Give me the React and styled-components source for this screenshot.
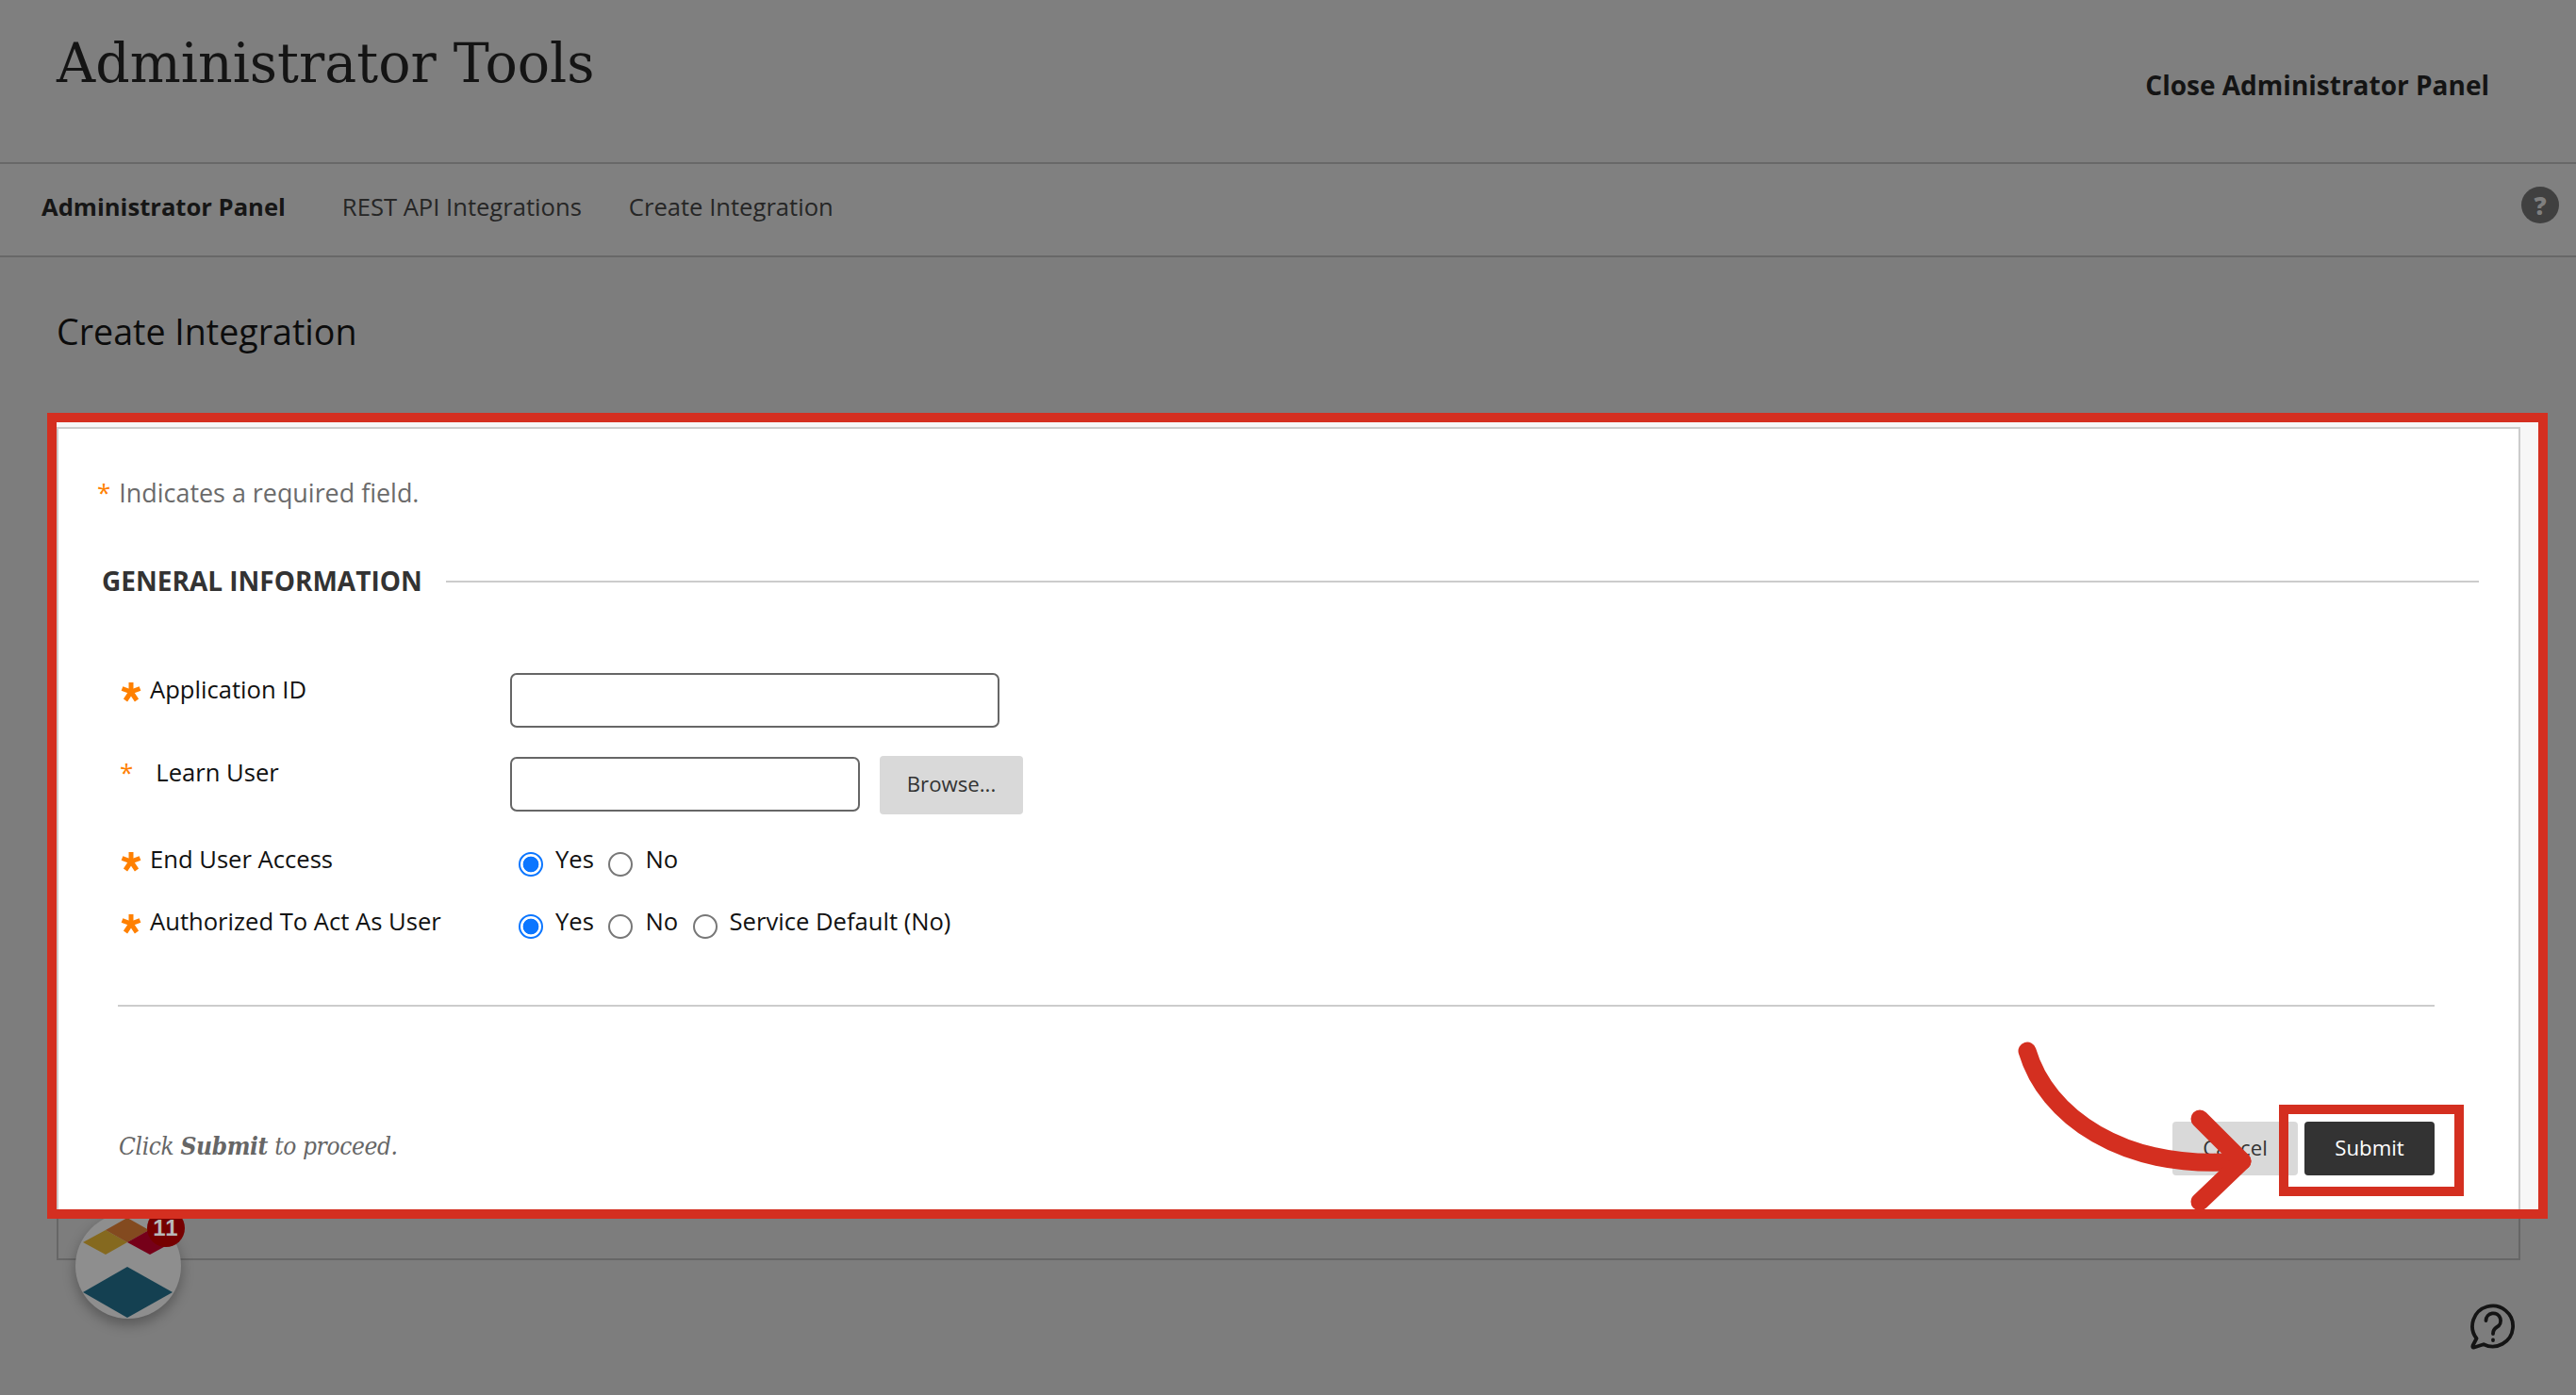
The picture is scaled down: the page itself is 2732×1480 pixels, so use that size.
import React from 'react';
import styled, { createGlobalStyle } from 'styled-components';

const sans = `"Open Sans", "Noto Sans", sans-serif`;
const serif = `"DejaVu Serif", "Liberation Serif", serif`;
const red = '#d42f20';

const GlobalStyle = createGlobalStyle`
    html, body {
        margin: 0;
        padding: 0;
        background: #7e7e7e;
    }
    * {
        box-sizing: border-box;
    }
`;

const Page = styled.div`
    position: relative;
    width: 2732px;
    height: 1480px;
    overflow: hidden;
    font-family: ${sans};
    background: #7d7d7d;
`;

const Header = styled.header`
    display: flex;
    justify-content: space-between;
    align-items: flex-start;
    height: 174px;
    padding: 0 92px 0 60px;
    background: #7f7f7f;
    border-bottom: 2px solid #686868;
`;

const Title = styled.h1`
    margin: 28px 0 0;
    font-family: ${serif};
    font-weight: 400;
    font-size: 57px;
    line-height: 78px;
    color: #141414;
`;

const CloseLink = styled.a`
    margin-top: 70px;
    font-size: 28px;
    font-weight: 700;
    line-height: 40px;
    color: #141414;
`;

const Nav = styled.nav`
    display: flex;
    align-items: center;
    height: 99px;
    padding: 0 17px 7px 44px;
    background: #808080;
    border-bottom: 2px solid #686868;
`;

const Crumb = styled.a`
    margin-right: ${(p) => p.$gap}px;
    font-size: 25.6px;
    font-weight: ${(p) => (p.$active ? 700 : 400)};
    color: ${(p) => (p.$active ? '#161616' : '#262626')};
`;

const HelpDot = styled.span`
    display: flex;
    align-items: center;
    justify-content: center;
    width: 40px;
    height: 39px;
    margin: -3px 1px 0 auto;
    border-radius: 50%;
    background: #404040;
    color: #7f7f7f;
    font-size: 26px;
    font-weight: 800;
`;

const Main = styled.main`
    padding: 0 59px 0 60px;
`;

const Heading = styled.h2`
    margin: 0;
    padding-top: 54px;
    height: 165px;
    font-size: 37.6px;
    font-weight: 400;
    line-height: 50px;
    color: #0c0c0c;
`;

const Frame = styled.div`
    position: relative;
    z-index: 2;
    margin: 0 -29px 0 -10px;
    padding: 5px 19px 0 0;
    height: 855px;
    background: #f7f7f7;
    border: 10px solid ${red};
`;

const Panel = styled.section`
    height: 830px;
    padding-top: 49px;
    background: #fff;
    border: 2px solid #cccccc;
    border-bottom: 0;
`;

const CardTail = styled.div`
    height: 44px;
    border: 2px solid #666;
    border-top: 0;
`;

const Note = styled.p`
    display: flex;
    align-items: center;
    gap: 9px;
    height: 36px;
    margin: 0 0 59px;
    padding-left: 41px;
    font-size: 26.9px;
    color: #6b6b6b;
`;

const SmallStar = styled.span`
    color: #ff8000;
    font-size: ${(p) => p.$size || 26}px;
    line-height: 1;
`;

const SectionHead = styled.div`
    display: flex;
    align-items: center;
    gap: 25px;
    height: 36px;
    padding: 0 42px 0 46px;
    font-size: 28px;
    font-weight: 700;
    color: #333;

    &::after {
        content: '';
        flex: 1;
        height: 2px;
        background: #ccc;
    }
`;

const SectionName = styled.span`
    margin-top: -3px;
`;

const Form = styled.form`
    display: flex;
    flex-direction: column;
    gap: 30px;
    margin-top: 79px;
    padding-left: 65px;
`;

const Row = styled.div`
    display: flex;
    align-items: flex-start;
`;

const Label = styled.label`
    display: flex;
    align-items: center;
    gap: 8px;
    width: 414px;
    height: 34px;
    font-size: 25.6px;
    color: #111;
`;

const Indented = styled.span`
    margin-left: 16px;
`;

const TextInput = styled.input`
    width: ${(p) => p.$w}px;
    height: 58px;
    margin-top: ${(p) => p.$top || 0}px;
    padding: 0 10px;
    border: 2px solid #666;
    border-radius: 7px;
    background: #fff;
`;

const GreyButton = styled.button`
    height: ${(p) => p.$h}px;
    width: ${(p) => p.$w}px;
    margin-left: ${(p) => p.$left || 0}px;
    padding: 0 0 3px;
    border: 0;
    border-radius: 4px;
    background: #d9d9d9;
    color: #333;
    font-family: ${sans};
    font-size: 22.2px;
`;

const DarkButton = styled(GreyButton)`
    background: #333;
    color: #fff;
`;

const Options = styled.div`
    display: flex;
    align-items: flex-start;
    padding-left: 9px;
    gap: 15.5px;
`;

const Option = styled.label`
    display: flex;
    align-items: flex-start;
    gap: 13px;
    height: 36px;
    font-size: 25.6px;
    line-height: 36px;
    color: #111;
`;

const Radio = styled.input.attrs({ type: 'radio' })`
    appearance: none;
    width: 26px;
    height: 26px;
    margin: 10px 0 0;
    border: 2px solid #777;
    border-radius: 50%;
    background: #fff;

    &:checked {
        border-color: #0b76ff;
        background: radial-gradient(circle, #0b76ff 0 8px, #fff 8.7px);
    }
`;

const Divider = styled.hr`
    height: 2px;
    margin: 70px 89px 0 63px;
    border: 0;
    background: #ccc;
`;

const Footer = styled.div`
    display: flex;
    align-items: center;
    margin: 122px 89px 0 63px;
`;

const Proceed = styled.p`
    flex: 1;
    margin: -5px 0 0 1px;
    font-family: ${serif};
    font-stretch: condensed;
    font-style: italic;
    font-size: 26px;
    letter-spacing: -0.35px;
    color: #666;
`;

const ButtonGap = styled.div`
    width: 7px;
`;

const SubmitMark = styled.div`
    position: absolute;
    left: 2357px;
    top: 724px;
    width: 196px;
    height: 97px;
    border: 10px solid ${red};
`;

const ArrowMark = styled.svg`
    position: absolute;
    left: 2080px;
    top: 660px;
    overflow: visible;
`;

const Launcher = styled.div`
    position: absolute;
    z-index: 1;
    left: 80px;
    top: 1287px;
    width: 112px;
    height: 112px;
    border-radius: 50%;
    background: #8e8e8e;
    box-shadow: 0 6px 14px rgba(0, 0, 0, 0.3);
`;

const Badge = styled.span`
    position: absolute;
    left: 76px;
    top: -4px;
    display: flex;
    align-items: center;
    justify-content: center;
    width: 40px;
    height: 40px;
    border-radius: 50%;
    background: #760000;
    color: #b8b8b8;
    font-family: "Liberation Sans", sans-serif;
    font-size: 24px;
    font-weight: 700;
    letter-spacing: 1px;
`;

const HelpBubble = styled.svg`
    position: absolute;
    left: 2617px;
    top: 1382px;
`;

const StarIcon = styled.svg`
    margin-top: 5px;
`;

function BigStar() {
    return (
        <StarIcon width="24" height="22" viewBox="0 0 23 22">
            <g stroke="#ff8000" strokeWidth="5" strokeLinecap="butt">
                <path d="M11.5 11V1" />
                <path d="M11.5 11L2 7.5" />
                <path d="M11.5 11L21 7.5" />
                <path d="M11.5 11L5.5 20" />
                <path d="M11.5 11L17.5 20" />
            </g>
        </StarIcon>
    );
}

export default function App() {
    return (
        <Page>
            <GlobalStyle />

            <Header>
                <Title>Administrator Tools</Title>
                <CloseLink>Close Administrator Panel</CloseLink>
            </Header>

            <Nav>
                <Crumb $active $gap={60}>Administrator Panel</Crumb>
                <Crumb $gap={50}>REST API Integrations</Crumb>
                <Crumb>Create Integration</Crumb>
                <HelpDot>?</HelpDot>
            </Nav>

            <Main>
                <Heading>Create Integration</Heading>

                <Frame>
                    <Panel>
                        <Note>
                            <SmallStar>*</SmallStar>
                            Indicates a required field.
                        </Note>

                        <SectionHead><SectionName>GENERAL INFORMATION</SectionName></SectionHead>

                        <Form>
                            <Row>
                                <Label><BigStar />Application ID</Label>
                                <TextInput $w={519} />
                            </Row>
                            <Row>
                                <Label>
                                    <SmallStar>*</SmallStar>
                                    <Indented>Learn User</Indented>
                                </Label>
                                <TextInput $w={371} $top={1} />
                                <GreyButton type="button" $w={152} $h={62} $left={21}>Browse...</GreyButton>
                            </Row>
                            <Row>
                                <Label><BigStar />End User Access</Label>
                                <Options>
                                    <Option><Radio name="access" defaultChecked />Yes</Option>
                                    <Option><Radio name="access" />No</Option>
                                </Options>
                            </Row>
                            <Row>
                                <Label><BigStar />Authorized To Act As User</Label>
                                <Options>
                                    <Option><Radio name="act" defaultChecked />Yes</Option>
                                    <Option><Radio name="act" />No</Option>
                                    <Option><Radio name="act" />Service Default (No)</Option>
                                </Options>
                            </Row>
                        </Form>

                        <Divider />

                        <Footer>
                            <Proceed>Click <b>Submit</b> to proceed.</Proceed>
                            <GreyButton type="button" $w={133} $h={57}>Cancel</GreyButton>
                            <ButtonGap />
                            <DarkButton type="button" $w={138} $h={57}>Submit</DarkButton>
                        </Footer>
                    </Panel>

                    <SubmitMark />

                    <ArrowMark width="260" height="180" viewBox="0 0 260 180" fill="none">
                        <g stroke={red} strokeLinecap="round" strokeLinejoin="round">
                            <path d="M10 7C30 75 110 135 238 124" strokeWidth="19" />
                            <path d="M193 79L238 124L193 167" strokeWidth="19" />
                        </g>
                    </ArrowMark>
                </Frame>

                <CardTail />
            </Main>

            <Launcher>
                <svg width="112" height="112" viewBox="0 0 112 112">
                    <polygon points="8,31 32,18 55,31 32,44" fill="#85691f" />
                    <polygon points="55,5 78,18 55,31 32,18" fill="#834a1f" />
                    <polygon points="78,18 103,31 79,44 55,31" fill="#760019" />
                    <polygon points="8,84 55,57 103,84 55,111" fill="#144051" />
                </svg>
                <Badge>11</Badge>
            </Launcher>

            <HelpBubble width="54" height="54" viewBox="0 0 54 54" fill="none" stroke="#141414" strokeWidth="3.8" strokeLinecap="round" strokeLinejoin="round">
                <path d="M9.5 38A21.5 21.5 0 1 1 17 44.2L7 47.5C5.5 48 5 47 5.6 45.5Z" />
                <path d="M19.5 19a7.8 7.8 0 1 1 11.5 7c-3 1.8-4 3.4-4 7" />
                <path d="M27 39.5v.5" />
            </HelpBubble>
        </Page>
    );
}
